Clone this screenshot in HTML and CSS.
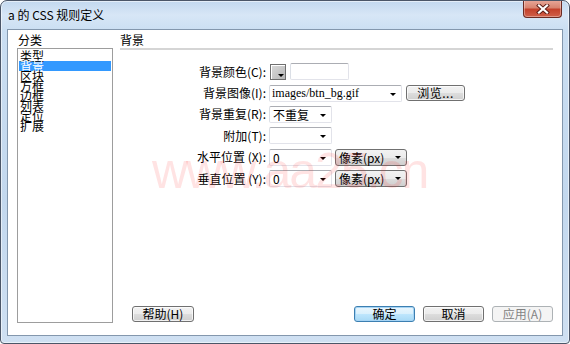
FILE: index.html
```html
<!DOCTYPE html>
<html lang="zh">
<head>
<meta charset="utf-8">
<title>a 的 CSS 规则定义</title>
<link rel="stylesheet" href="styles.css">
</head>
<body>
<div class="window">
  <div class="titlebar">
    <span class="title">a 的 CSS 规则定义</span>
    <span class="close">
      <svg width="14" height="10" viewBox="0 0 14 10">
        <path d="M3 1.5 L11 8.5 M11 1.5 L3 8.5" stroke="#5a1a14" stroke-width="4" stroke-linecap="square"/>
        <path d="M3 1.5 L11 8.5 M11 1.5 L3 8.5" stroke="#ffffff" stroke-width="2.2" stroke-linecap="square"/>
      </svg>
    </span>
  </div>
  <div class="client">
    <div class="left">
      <div class="caption">分类</div>
      <ul class="list">
        <li>类型</li>
        <li class="sel">背景</li>
        <li>区块</li>
        <li>方框</li>
        <li>边框</li>
        <li>列表</li>
        <li>定位</li>
        <li>扩展</li>
      </ul>
    </div>
    <div class="right">
      <div class="heading">背景</div>
      <div class="form">
        <div class="label">背景颜色(C):</div>
        <div class="ctl"><span class="swatch"></span><span class="input w59"></span></div>

        <div class="label">背景图像(I):</div>
        <div class="ctl"><span class="combo w133 mono">images/btn_bg.gif</span><span class="btn browse">浏览...</span></div>

        <div class="label">背景重复(R):</div>
        <div class="ctl"><span class="combo w63">不重复</span></div>

        <div class="label">附加(T):</div>
        <div class="ctl"><span class="combo w63"></span></div>

        <div class="label">水平位置 (X):</div>
        <div class="ctl"><span class="combo w63">0</span><span class="dd">像素(px)</span></div>

        <div class="label">垂直位置 (Y):</div>
        <div class="ctl"><span class="combo w63">0</span><span class="dd">像素(px)</span></div>
      </div>
      <div class="buttons">
        <span class="btn help">帮助(H)</span>
        <span class="spacer"></span>
        <span class="btn default">确定</span>
        <span class="btn">取消</span>
        <span class="btn disabled">应用(A)</span>
      </div>
    </div>
  </div>
  <div class="watermark">www.aa25.cn</div>
</div>
</body>
</html>
```
FILE: styles.css
```css
* { box-sizing: border-box; }
html, body { margin: 0; padding: 0; }
body {
  width: 570px;
  height: 344px;
  overflow: hidden;
  background: #ffffff;
  font-family: "Noto Sans CJK SC", "Noto Sans", sans-serif;
  font-size: 12px;
  color: #000;
}
.window {
  position: relative;
  width: 570px;
  height: 344px;
  border: 1px solid #4b5668;
  border-radius: 7px 7px 4px 4px;
  background: linear-gradient(to bottom, #c2d8ef 0px, #d7e6f6 14px, #cadef2 30px, #c3d8ee 200px, #cfe0f2 344px);
  box-shadow: inset 0 0 0 1px rgba(255,255,255,0.55);
  display: flex;
  flex-direction: column;
  overflow: hidden;
}
.titlebar {
  height: 28px;
  display: flex;
  align-items: center;
  padding-left: 7px;
  padding-bottom: 2px;
}
.title {
  font-size: 12px;
  color: #000;
}
.close {
  margin-left: auto;
  margin-right: 7px;
  align-self: flex-start;
  margin-top: -1px;
  width: 39px;
  height: 18px;
  border: 1px solid #6b2a22;
  border-top: none;
  border-radius: 0 0 4px 4px;
  background: linear-gradient(to bottom, #e9a99b 0%, #d88470 45%, #c4412b 55%, #d0604a 100%);
  box-shadow: inset 0 0 0 1px rgba(255,255,255,0.35);
  display: flex;
  align-items: center;
  justify-content: center;
}
.client {
  flex: 1;
  margin: 0 6px 7px 6px;
  border: 1px solid #8397ad;
  background: #ffffff;
  display: flex;
  padding: 3px 9px 12px 9px;
  gap: 7px;
}
.left {
  width: 96px;
  display: flex;
  flex-direction: column;
}
.caption {
  height: 15px;
  line-height: 14px;
  padding-left: 1px;
}
.list {
  flex: 1;
  margin: 0;
  padding: 2px 1px 0 1px;
  list-style: none;
  border: 1px solid #9d9d9d;
}
.list li {
  height: 10px;
  line-height: 10px;
  font-size: 12px;
  padding-left: 1px;
  white-space: nowrap;
}
.list li.sel {
  background: #3399ff;
  color: #ffffff;
}
.right {
  flex: 1;
  display: flex;
  flex-direction: column;
}
.heading {
  height: 17px;
  line-height: 14px;
  border-bottom: 2px solid #d5d5d5;
}
.form {
  margin-top: 11px;
  display: grid;
  grid-template-columns: 146px 1fr;
  grid-auto-rows: 21.4px;
  column-gap: 3px;
  align-items: center;
}
.label {
  text-align: right;
  white-space: nowrap;
  line-height: 14px;
}
.ctl {
  display: flex;
  align-items: center;
  gap: 3px;
}
.swatch {
  position: relative;
  width: 16px;
  height: 16px;
  border: 1px solid #6f6f6f;
  background: linear-gradient(135deg, #d9d9d9, #b8b8b8);
  box-shadow: inset 1px 1px 0 #ffffff;
  margin-left: 1px;
  margin-right: 1px;
}
.swatch::after {
  content: "";
  position: absolute;
  right: 1px;
  bottom: 2px;
  border-left: 3px solid transparent;
  border-right: 3px solid transparent;
  border-top: 3px solid #000;
}
.input, .combo {
  height: 17px;
  border: 1px solid #e2e3ea;
  border-top-color: #abadb3;
  border-left-color: #dbdfe6;
  border-radius: 2px;
  background: #ffffff;
  line-height: 15px;
  padding-left: 3px;
  white-space: nowrap;
  overflow: hidden;
}
.combo {
  position: relative;
}
.combo::after {
  content: "";
  position: absolute;
  right: 5px;
  top: 7px;
  border-left: 3.5px solid transparent;
  border-right: 3.5px solid transparent;
  border-top: 3.5px solid #000;
}
.w59 { width: 59px; }
.w63 { width: 63px; }
.w133 { width: 133px; }
.mono {
  font-family: "Liberation Serif", "DejaVu Serif", serif;
  font-size: 12px;
  padding-left: 2px;
}
.dd {
  position: relative;
  width: 72px;
  height: 17px;
  border: 1px solid #707070;
  border-radius: 3px;
  background: linear-gradient(to bottom, #f2f2f2 0%, #ebebeb 50%, #dddddd 51%, #cfcfcf 100%);
  line-height: 15px;
  padding-left: 3px;
  white-space: nowrap;
}
.dd::after {
  content: "";
  position: absolute;
  right: 5px;
  top: 6px;
  border-left: 3.5px solid transparent;
  border-right: 3.5px solid transparent;
  border-top: 3.5px solid #000;
}
.btn {
  display: inline-flex;
  align-items: center;
  justify-content: center;
  height: 16px;
  width: 61px;
  border: 1px solid #707070;
  border-radius: 3px;
  background: linear-gradient(to bottom, #f2f2f2 0%, #ebebeb 50%, #dddddd 51%, #cfcfcf 100%);
  box-shadow: inset 0 0 0 1px rgba(255,255,255,0.7);
  line-height: 14px;
  white-space: nowrap;
}
.browse {
  width: 59px;
  height: 16px;
  margin-left: 1px;
  letter-spacing: 0.5px;
}
.buttons {
  margin-top: auto;
  margin-bottom: 1px;
  display: flex;
  gap: 8px;
}
.help {
  margin-left: 12px;
  width: 62px;
}
.spacer { flex: 1; }
.default {
  width: 61px;
  border-color: #3c7fb1;
  box-shadow: inset 0 0 0 1px #a6d4f4;
  background: linear-gradient(to bottom, #eaf6fd 0%, #d9f0fc 50%, #bee6fd 51%, #a7d9f5 100%);
}
.disabled {
  border-color: #adb2b5;
  background: #f4f4f4;
  color: #838383;
  box-shadow: none;
}
.watermark {
  position: absolute;
  left: 151px;
  top: 145px;
  font-family: "Liberation Sans", Arial, sans-serif;
  font-size: 50px;
  line-height: 50px;
  letter-spacing: -2px;
  color: rgba(255, 40, 40, 0.13);
  pointer-events: none;
  white-space: nowrap;
}
```
